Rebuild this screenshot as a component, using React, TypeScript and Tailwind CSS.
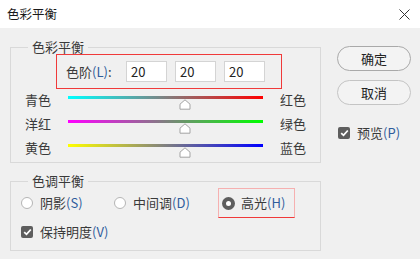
import React from 'react';

const font = { fontFamily: '"Noto Sans CJK SC", "Noto Sans", sans-serif' };

function Key({ k }: { k: string }) {
  return <span className="text-[#2f5d9c]">({k})</span>;
}

function Thumb() {
  return (
    <svg width="12" height="11" viewBox="0 0 12 11">
      <path
        d="M6 0.8 L11 5.2 V10.2 H1 V5.2 Z"
        fill="#ffffff"
        stroke="#a3a3a3"
        strokeWidth="1"
        strokeLinejoin="round"
      />
    </svg>
  );
}

interface SliderRowProps {
  left: string;
  right: string;
  from: string;
  to: string;
  value: number;
}

function SliderRow({ left, right, from, to, value }: SliderRowProps) {
  const pct = (value + 100) / 200;
  return (
    <div className="flex items-start h-[24px] pl-[14px]">
      <span className="w-[43px] mt-[2px] leading-[16px]">{left}</span>
      <div className="relative w-[195px] h-[24px]">
        <div
          className="mt-[6px] h-[3px] w-full"
          style={{ background: `linear-gradient(to right, ${from}, ${to})` }}
        />
        <div className="absolute top-[9px]" style={{ left: `calc(${pct * 100}% - 6px)` }}>
          <Thumb />
        </div>
      </div>
      <span className="ml-[17px] mt-[2px] leading-[16px]">{right}</span>
    </div>
  );
}

function Radio({ checked }: { checked?: boolean }) {
  if (checked) {
    return (
      <span className="w-[13px] h-[13px] rounded-full bg-[#5e5e5e] flex items-center justify-center">
        <span className="w-[5px] h-[5px] rounded-full bg-white" />
      </span>
    );
  }
  return <span className="w-[12px] h-[12px] rounded-full border border-[#b5b5b5] bg-white" />;
}

function Check() {
  return (
    <span className="w-[12px] h-[12px] rounded-[2px] bg-[#5e5e5e] flex items-center justify-center">
      <svg width="9" height="8" viewBox="0 0 9 8">
        <path d="M1.2 4.2 L3.5 6.3 L7.8 1.5" fill="none" stroke="#fff" strokeWidth="1.8" />
      </svg>
    </span>
  );
}

function NumBox({ value }: { value: string }) {
  return (
    <div className="w-[41px] h-[21px] bg-white border border-[#d4d4d4] pl-[4px] leading-[19px] text-[13px] text-[#222]">
      {value}
    </div>
  );
}

export default function App() {
  return (
    <div className="w-[420px] h-[259px] bg-[#f0f0f0] text-[13px] text-[#3a3a3a] overflow-hidden" style={font}>
      {/* title bar */}
      <div className="h-[28px] bg-white flex items-center justify-between pl-[7px] pr-[10px]">
        <span className="text-[12.5px] text-[#1a1a1a]">色彩平衡</span>
        <svg width="11" height="11" viewBox="0 0 11 11">
          <path d="M0.5 0.5 L10.5 10.5 M10.5 0.5 L0.5 10.5" stroke="#333" strokeWidth="1" />
        </svg>
      </div>

      <div className="flex">
        {/* left column */}
        <div className="pl-[10px] w-[321px]">
          <fieldset className="mt-[12px] border border-[#d9d9d9]">
            <legend className="ml-[17px] px-[4px] leading-[14px]">色彩平衡</legend>
            <div className="ml-[45px] w-[226px] h-[35px] border border-[#f03a3a] flex items-center pl-[9px] gap-[8px]">
              <span className="w-[52px]">
                色阶<Key k="L" />:
              </span>
              <NumBox value="20" />
              <NumBox value="20" />
              <NumBox value="20" />
            </div>
            <div className="mt-[1px]">
              <SliderRow left="青色" right="红色" from="#00ffff" to="#ff0000" value={20} />
              <SliderRow left="洋红" right="绿色" from="#ff00ff" to="#00ff00" value={20} />
              <SliderRow left="黄色" right="蓝色" from="#ffff00" to="#0000ff" value={20} />
            </div>
          </fieldset>

          <fieldset className="mt-[11px] border border-[#d9d9d9] px-[10px] pb-[6px]">
            <legend className="ml-[7px] px-[4px] leading-[14px]">色调平衡</legend>
            <div className="flex items-center h-[30px]">
              <div className="w-[93px] flex items-center gap-[7px]">
                <Radio />
                <span>
                  阴影<Key k="S" />
                </span>
              </div>
              <div className="w-[104px] flex items-center gap-[7px]">
                <Radio />
                <span>
                  中间调<Key k="D" />
                </span>
              </div>
              <div className="w-[77px] h-[30px] border border-[#f6b0b0] border-b-[#f03a3a] flex items-center pl-[3px] gap-[6px]">
                <Radio checked />
                <span>
                  高光<Key k="H" />
                </span>
              </div>
            </div>
            <div className="mt-[2px] h-[24px] flex items-center gap-[7px]">
              <Check />
              <span>
                保持明度<Key k="V" />
              </span>
            </div>
          </fieldset>
        </div>

        {/* right column */}
        <div className="ml-[16px] w-[74px] pt-[18px] flex flex-col">
          <button className="h-[25px] rounded-full border border-[#a9a9a9] bg-[#f3f3f3] text-[#222]">确定</button>
          <button className="mt-[9px] h-[25px] rounded-full border border-[#c4c4c4] bg-[#f3f3f3] text-[#222]">取消</button>
          <div className="mt-[18px] flex items-center gap-[7px] pl-[1px]">
            <Check />
            <span>
              预览<Key k="P" />
            </span>
          </div>
        </div>
      </div>
    </div>
  );
}
